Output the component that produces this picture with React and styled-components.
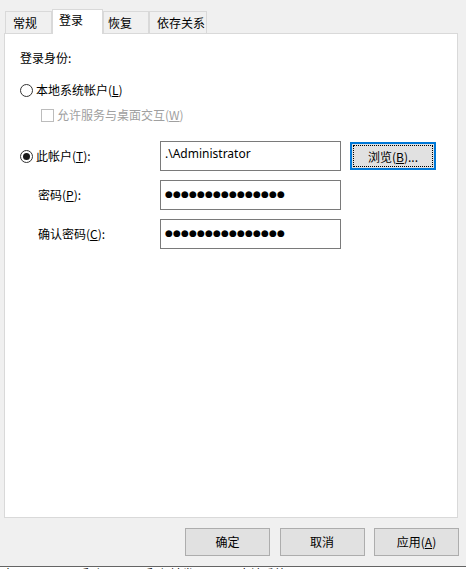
import React from "react";
import styled, { createGlobalStyle } from "styled-components";

const GlobalStyle = createGlobalStyle`
    html, body {
        margin: 0;
        padding: 0;
        background: #F0F0F0;
    }
    body {
        font: 12px/16px "Noto Sans CJK SC", "Noto Sans", sans-serif;
        color: #000;
    }
    * { box-sizing: border-box; }
`;

const Dialog = styled.div`
    width: 466px;
    height: 569px;
    display: flex;
    flex-direction: column;
    padding: 9px 0 0 4px;
    overflow: hidden;
`;

const TabBar = styled.div`
    display: flex;
    align-items: flex-end;
    height: 24px;
    padding-left: 1px;
`;

const Tab = styled.div`
    position: relative;
    width: ${p => p.$w}px;
    height: ${p => (p.$active ? 25 : 22)}px;
    padding: ${p => (p.$active ? 2 : 3)}px 0 0 ${p => p.$pad}px;
    margin-bottom: ${p => (p.$active ? -1 : 0)}px;
    border: 1px solid #D9D9D9;
    border-bottom: none;
    background: ${p => (p.$active ? "#FFFFFF" : "#F0F0F0")};
    z-index: ${p => (p.$active ? 1 : 0)};
    white-space: nowrap;
`;

const Panel = styled.div`
    width: 454px;
    height: 485px;
    border: 1px solid #D9D9D9;
    background: #FFFFFF;
    padding: 16px 0 0 15px;
    display: flex;
    flex-direction: column;
`;

const Heading = styled.div`
    height: 16px;
`;

const OptionRow = styled.div`
    display: flex;
    align-items: center;
    gap: 3px;
    height: 16px;
    margin-top: ${p => p.$top}px;
    padding-left: ${p => p.$indent || 0}px;
    color: ${p => (p.$disabled ? "#A0A0A0" : "#000")};
`;

const Radio = styled.span`
    width: 13px;
    height: 13px;
    border-radius: 50%;
    border: 1px solid #333333;
    background: #FFFFFF;
    display: flex;
    align-items: center;
    justify-content: center;
    flex: none;
    &::after {
        content: "";
        display: ${p => (p.$checked ? "block" : "none")};
        width: 7px;
        height: 7px;
        border-radius: 50%;
        background: #1A1A1A;
    }
`;

const Check = styled.span`
    width: 13px;
    height: 13px;
    border: 1px solid #BCBCBC;
    background: #FFFFFF;
    flex: none;
`;

const Key = styled.span`
    text-decoration: underline;
    text-underline-offset: 1px;
`;

const AccountGrid = styled.div`
    display: grid;
    grid-template-columns: 140px 181px 95px;
    grid-auto-rows: 30px;
    row-gap: 9px;
    margin-top: 18px;
    align-items: center;
`;

const FieldLabel = styled.div`
    display: flex;
    align-items: center;
    gap: 3px;
    padding-left: ${p => p.$indent || 0}px;
`;

const TextBox = styled.div`
    height: 30px;
    border: 1px solid #7A7A7A;
    background: #FFFFFF;
    padding: 4px 0 0 4px;
    font-family: "Noto Sans", "Noto Sans CJK SC", sans-serif;
    white-space: nowrap;
`;

const Dot = styled.span`
    display: inline-block;
    width: 8px;
    text-align: center;
    font: 9px/12px "DejaVu Sans", sans-serif;
`;

const Browse = styled.button`
    justify-self: end;
    height: 28px;
    width: 86px;
    padding: 1px;
    border: 2px solid #0078D7;
    background: #E1E1E1;
    font: inherit;
    color: #000;
`;

const FocusRing = styled.span`
    display: block;
    height: 100%;
    line-height: 22px;
    text-align: center;
    border: 1px dotted #000;
`;

const ButtonBar = styled.div`
    display: flex;
    justify-content: flex-end;
    gap: 9.5px;
    padding-right: 7px;
    margin-top: 10px;
`;

const Button = styled.button`
    width: 85px;
    height: 28px;
    border: 1px solid #ADADAD;
    background: #E1E1E1;
    font: inherit;
    color: #000;
    padding: 0;
`;

const Behind = styled.div`
    margin: 10px 0 0 -4px;
    border-top: 1px solid #646464;
    background: #FFFFFF;
    flex: 1;
    display: flex;
    gap: 40px;
    padding-left: 2px;
    overflow: hidden;
    span {
        margin-top: -1px;
        line-height: 16px;
    }
`;

const Password = ({ count }) => (
    <TextBox>
        {Array.from({ length: count }).map((_, i) => (
            <Dot key={i}>●</Dot>
        ))}
    </TextBox>
);

const App = () => {
    return (
        <>
            <GlobalStyle />
            <Dialog>
                <TabBar>
                    <Tab $w={47} $pad={7}>常规</Tab>
                    <Tab $w={51} $pad={6} $active>登录</Tab>
                    <Tab $w={46} $pad={4}>恢复</Tab>
                    <Tab $w={58} $pad={7}>依存关系</Tab>
                </TabBar>
                <Panel>
                    <Heading>登录身份:</Heading>
                    <OptionRow $top={16}>
                        <Radio />
                        <span>本地系统帐户(<Key>L</Key>)</span>
                    </OptionRow>
                    <OptionRow $top={9} $indent={21} $disabled>
                        <Check />
                        <span>允许服务与桌面交互(<Key>W</Key>)</span>
                    </OptionRow>
                    <AccountGrid>
                        <FieldLabel>
                            <Radio $checked />
                            <span>此帐户(<Key>T</Key>):</span>
                        </FieldLabel>
                        <TextBox>.\Administrator</TextBox>
                        <Browse><FocusRing>浏览(<Key>B</Key>)...</FocusRing></Browse>
                        <FieldLabel $indent={18}><span>密码(<Key>P</Key>):</span></FieldLabel>
                        <Password count={15} />
                        <div />
                        <FieldLabel $indent={18}><span>确认密码(<Key>C</Key>):</span></FieldLabel>
                        <Password count={15} />
                        <div />
                    </AccountGrid>
                </Panel>
                <ButtonBar>
                    <Button>确定</Button>
                    <Button>取消</Button>
                    <Button>应用(<Key>A</Key>)</Button>
                </ButtonBar>
                <Behind>
                    <span>本 8 正</span>
                    <span>手动</span>
                    <span>手动(触发)</span>
                    <span>本地系统</span>
                </Behind>
            </Dialog>
        </>
    );
};

export default App;
